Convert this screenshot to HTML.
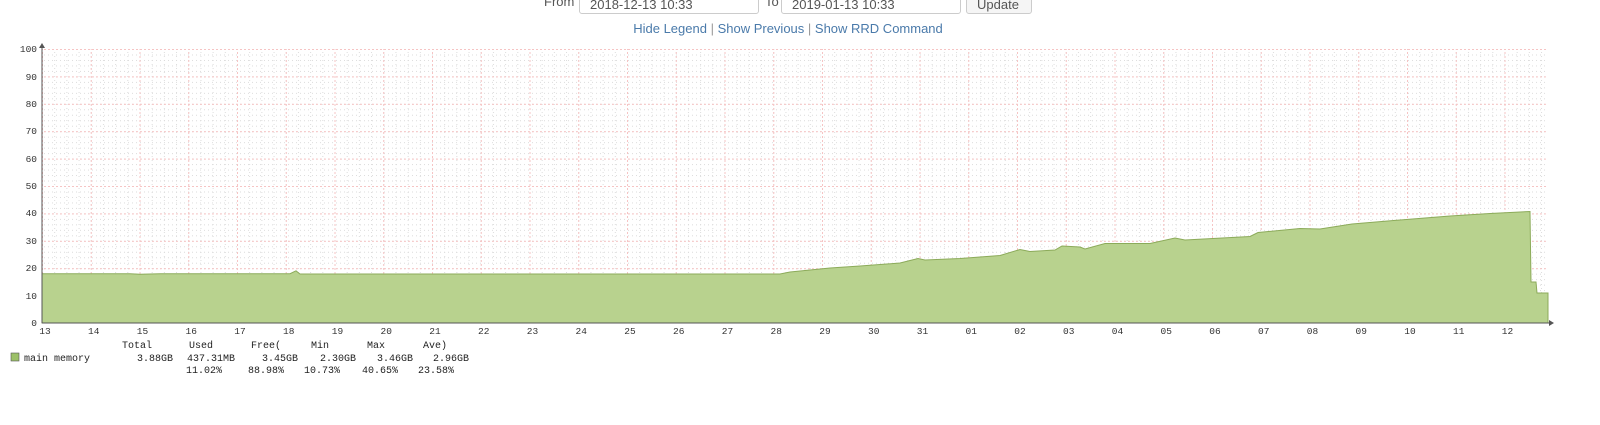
<!DOCTYPE html>
<html><head><meta charset="utf-8"><style>
html,body{margin:0;padding:0;width:1600px;height:425px;background:#fff;overflow:hidden;font-family:"Liberation Sans",sans-serif}
.box{position:absolute;top:-12px;height:26px;border:1px solid #ccc;border-radius:3px;background:#fff;font-size:13px;color:#555;box-sizing:border-box;padding:8px 10px 0}
.lbl{position:absolute;top:-6px;font-size:13px;color:#555}
.links{position:absolute;top:21px;left:0;width:1576px;text-align:center;font-size:13px;color:#4a7aaa}
.links span{color:#999}
</style></head><body>
<div class="lbl" style="left:544px">From</div>
<div class="box" style="left:579px;width:180px">2018-12-13 10:33</div>
<div class="lbl" style="left:765px">To</div>
<div class="box" style="left:781px;width:180px">2019-01-13 10:33</div>
<div class="box" style="left:966px;width:66px;background:#f5f5f5">Update</div>
<div class="links">Hide Legend <span>|</span> Show Previous <span>|</span> Show RRD Command</div>
<svg width="1600" height="425" style="position:absolute;left:0;top:0" font-family="Liberation Mono, DejaVu Sans Mono, monospace" font-size="9.5">
<defs>
<pattern id="hmin" patternUnits="userSpaceOnUse" x="0" y="323" width="4" height="5.48"><line x1="0" x2="1" y1="0.5" y2="0.5" stroke="#dcdcdc"/></pattern>
<pattern id="vmin" patternUnits="userSpaceOnUse" x="42" y="0" width="12.1875" height="4"><line x1="0.5" x2="0.5" y1="0" y2="1" stroke="#dcdcdc"/></pattern>
<pattern id="hmaj" patternUnits="userSpaceOnUse" x="0" y="323" width="4" height="27.4"><line x1="0" x2="2" y1="0.5" y2="0.5" stroke="#f6c4c4"/></pattern>
<pattern id="vmaj" patternUnits="userSpaceOnUse" x="42" y="0" width="48.75" height="4"><line x1="0.5" x2="0.5" y1="0" y2="2" stroke="#f6c4c4"/></pattern>
</defs>
<rect x="42" y="49" width="1506" height="274" fill="url(#hmin)"/>
<rect x="42" y="49" width="1506" height="274" fill="url(#vmin)"/>
<rect x="42" y="49" width="1506" height="274" fill="url(#hmaj)"/>
<rect x="42" y="49" width="1506" height="274" fill="url(#vmaj)"/>
<polygon fill="#b8d28e" stroke="#8cab5a" stroke-width="1" points="42,323 42,273.7 130,273.7 140,274.3 160,273.7 290,273.7 296,270.8 300,274 780,274 790,272 805,270.5 830,268 860,266 900,263 918,258.5 925,260 960,258.5 1000,255.5 1020,249.5 1030,251.5 1055,250 1062,246 1080,247 1085,249 1105,243.5 1150,243.5 1175,238 1185,240 1250,236.5 1258,232.5 1300,228.5 1320,229 1352,224 1400,220 1450,216 1490,213.5 1530,211.5 1531,282 1536,282 1537,293 1548,293 1548,323"/>
<line x1="42" y1="323" x2="1553" y2="323" stroke="#555"/>
<line x1="42" y1="323" x2="42" y2="45" stroke="#555"/>
<polygon points="39,48 45,48 42,43" fill="#555"/>
<polygon points="1549,320 1549,326 1554,323" fill="#555"/>
<g text-anchor="end" fill="#333">
<text x="37" y="52">100</text><text x="37" y="80">90</text><text x="37" y="107">80</text><text x="37" y="134">70</text><text x="37" y="162">60</text><text x="37" y="189">50</text><text x="37" y="216">40</text><text x="37" y="244">30</text><text x="37" y="271">20</text><text x="37" y="299">10</text><text x="37" y="326">0</text>
</g>
<g text-anchor="middle" fill="#333">
<text x="45" y="334">13</text><text x="93.75" y="334">14</text><text x="142.5" y="334">15</text><text x="191.25" y="334">16</text><text x="240" y="334">17</text><text x="288.75" y="334">18</text><text x="337.5" y="334">19</text><text x="386.25" y="334">20</text><text x="435" y="334">21</text><text x="483.75" y="334">22</text><text x="532.5" y="334">23</text><text x="581.25" y="334">24</text><text x="630" y="334">25</text><text x="678.75" y="334">26</text><text x="727.5" y="334">27</text><text x="776.25" y="334">28</text><text x="825" y="334">29</text><text x="873.75" y="334">30</text><text x="922.5" y="334">31</text><text x="971.25" y="334">01</text><text x="1020" y="334">02</text><text x="1068.75" y="334">03</text><text x="1117.5" y="334">04</text><text x="1166.25" y="334">05</text><text x="1215" y="334">06</text><text x="1263.75" y="334">07</text><text x="1312.5" y="334">08</text><text x="1361.25" y="334">09</text><text x="1410" y="334">10</text><text x="1458.75" y="334">11</text><text x="1507.5" y="334">12</text>
</g>
<g fill="#222" font-size="10">
<text x="122" y="348">Total</text><text x="189" y="348">Used</text><text x="251" y="348">Free(</text><text x="311" y="348">Min</text><text x="367" y="348">Max</text><text x="423" y="348">Ave)</text>
<rect x="11" y="353" width="8" height="8" fill="#9cc068" stroke="#555" stroke-width="0.6"/>
<text x="24" y="361">main memory</text>
<text x="137" y="361">3.88GB</text><text x="187" y="361">437.31MB</text><text x="262" y="361">3.45GB</text><text x="320" y="361">2.30GB</text><text x="377" y="361">3.46GB</text><text x="433" y="361">2.96GB</text>
<text x="186" y="373">11.02%</text><text x="248" y="373">88.98%</text><text x="304" y="373">10.73%</text><text x="362" y="373">40.65%</text><text x="418" y="373">23.58%</text>
</g>
</svg>
</body></html>
